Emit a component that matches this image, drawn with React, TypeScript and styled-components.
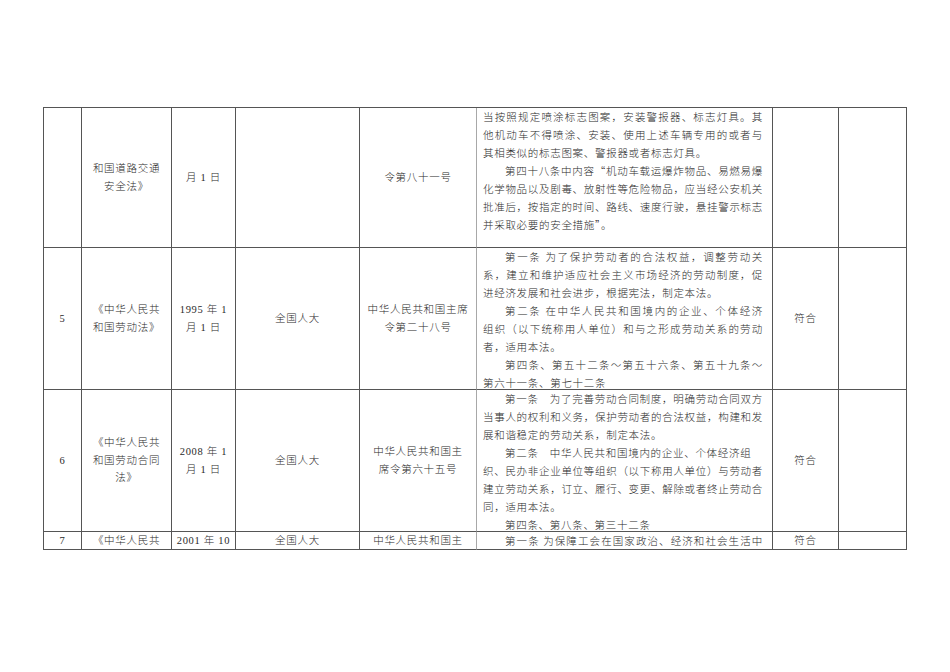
import React from 'react';
import styled, { createGlobalStyle } from 'styled-components';

const GlobalStyle = createGlobalStyle`
    html, body {
        margin: 0;
        padding: 0;
        background: #ffffff;
    }
    body {
        font-family: "Liberation Serif", "Noto Sans CJK SC", serif;
        color: #2a2a2a;
    }
`;

const Page = styled.div`
    padding: 107px 0 0 43px;
`;

const Table = styled.div`
    display: grid;
    width: max-content;
    grid-template-columns: 38px 90px 64px 124px 117px 296px 66px 68px;
    grid-template-rows: 140px 142px 142px 18px;
    border-top: 1px solid #555;
    border-left: 1px solid #555;
`;

const Cell = styled.div<{ $light?: boolean }>`
    box-sizing: border-box;
    display: flex;
    flex-direction: column;
    align-items: center;
    justify-content: center;
    text-align: center;
    overflow: hidden;
    border-right: 1px solid ${(p) => (p.$light ? '#a8a8a8' : '#555')};
    border-bottom: 1px solid #555;
    font-size: 10.5px;
    font-weight: 300;
    letter-spacing: 0.7px;
    line-height: 17.5px;
`;

const CellLine = styled.span`
    white-space: nowrap;
`;

const ContentCell = styled(Cell)`
    display: block;
    align-items: stretch;
    text-align: left;
    padding: 0 9px 0 6px;
    line-height: 18px;
    font-family: "Noto Sans CJK SC", "Liberation Serif", sans-serif;
`;

const TextLine = styled.div<{ $indent?: boolean; $full?: boolean }>`
    white-space: nowrap;
    padding-left: ${(p) => (p.$indent ? '22px' : '0')};
    text-align: ${(p) => (p.$full ? 'justify' : 'left')};
    text-align-last: ${(p) => (p.$full ? 'justify' : 'left')};
`;

type Line = { t: string; i?: boolean; f?: boolean };

type Row = {
    no: string;
    name: string[];
    date: string[];
    org: string[];
    doc: string[];
    content: Line[];
    result: string;
};

const rows: Row[] = [
    {
        no: '',
        name: ['和国道路交通', '安全法》'],
        date: ['月 1 日'],
        org: [],
        doc: ['令第八十一号'],
        content: [
            { t: '当按照规定喷涂标志图案，安装警报器、标志灯具。其', f: true },
            { t: '他机动车不得喷涂、安装、使用上述车辆专用的或者与', f: true },
            { t: '其相类似的标志图案、警报器或者标志灯具。' },
            { t: '第四十八条中内容“机动车载运爆炸物品、易燃易爆', i: true, f: true },
            { t: '化学物品以及剧毒、放射性等危险物品，应当经公安机关', f: true },
            { t: '批准后，按指定的时间、路线、速度行驶，悬挂警示标志', f: true },
            { t: '并采取必要的安全措施”。' },
        ],
        result: '',
    },
    {
        no: '5',
        name: ['《中华人民共', '和国劳动法》'],
        date: ['1995 年 1', '月 1 日'],
        org: ['全国人大'],
        doc: ['中华人民共和国主席', '令第二十八号'],
        content: [
            { t: '第一条 为了保护劳动者的合法权益，调整劳动关', i: true, f: true },
            { t: '系，建立和维护适应社会主义市场经济的劳动制度，促', f: true },
            { t: '进经济发展和社会进步，根据宪法，制定本法。' },
            { t: '第二条 在中华人民共和国境内的企业、个体经济', i: true, f: true },
            { t: '组织（以下统称用人单位）和与之形成劳动关系的劳动', f: true },
            { t: '者，适用本法。' },
            { t: '第四条、第五十二条～第五十六条、第五十九条～', i: true, f: true },
            { t: '第六十一条、第七十二条' },
        ],
        result: '符合',
    },
    {
        no: '6',
        name: ['《中华人民共', '和国劳动合同', '法》'],
        date: ['2008 年 1', '月 1 日'],
        org: ['全国人大'],
        doc: ['中华人民共和国主', '席令第六十五号'],
        content: [
            { t: '第一条　为了完善劳动合同制度，明确劳动合同双方', i: true, f: true },
            { t: '当事人的权利和义务，保护劳动者的合法权益，构建和发', f: true },
            { t: '展和谐稳定的劳动关系，制定本法。' },
            { t: '第二条　中华人民共和国境内的企业、个体经济组', i: true },
            { t: '织、民办非企业单位等组织（以下称用人单位）与劳动者', f: true },
            { t: '建立劳动关系，订立、履行、变更、解除或者终止劳动合', f: true },
            { t: '同，适用本法。' },
            { t: '第四条、第八条、第三十二条', i: true },
        ],
        result: '符合',
    },
    {
        no: '7',
        name: ['《中华人民共'],
        date: ['2001 年 10'],
        org: ['全国人大'],
        doc: ['中华人民共和国主'],
        content: [{ t: '第一条 为保障工会在国家政治、经济和社会生活中', i: true, f: true }],
        result: '符合',
    },
];

function Lines({ items }: { items: string[] }) {
    return (
        <>
            {items.map((l, i) => (
                <CellLine key={i}>{l}</CellLine>
            ))}
        </>
    );
}

export default function App() {
    return (
        <>
            <GlobalStyle />
            <Page>
                <Table>
                    {rows.map((r, idx) => (
                        <React.Fragment key={idx}>
                            <Cell>{r.no}</Cell>
                            <Cell>
                                <Lines items={r.name} />
                            </Cell>
                            <Cell>
                                <Lines items={r.date} />
                            </Cell>
                            <Cell>
                                <Lines items={r.org} />
                            </Cell>
                            <Cell $light>
                                <Lines items={r.doc} />
                            </Cell>
                            <ContentCell>
                                {r.content.map((l, i) => (
                                    <TextLine key={i} $indent={l.i} $full={l.f}>
                                        {l.t}
                                    </TextLine>
                                ))}
                            </ContentCell>
                            <Cell>{r.result}</Cell>
                            <Cell></Cell>
                        </React.Fragment>
                    ))}
                </Table>
            </Page>
        </>
    );
}
